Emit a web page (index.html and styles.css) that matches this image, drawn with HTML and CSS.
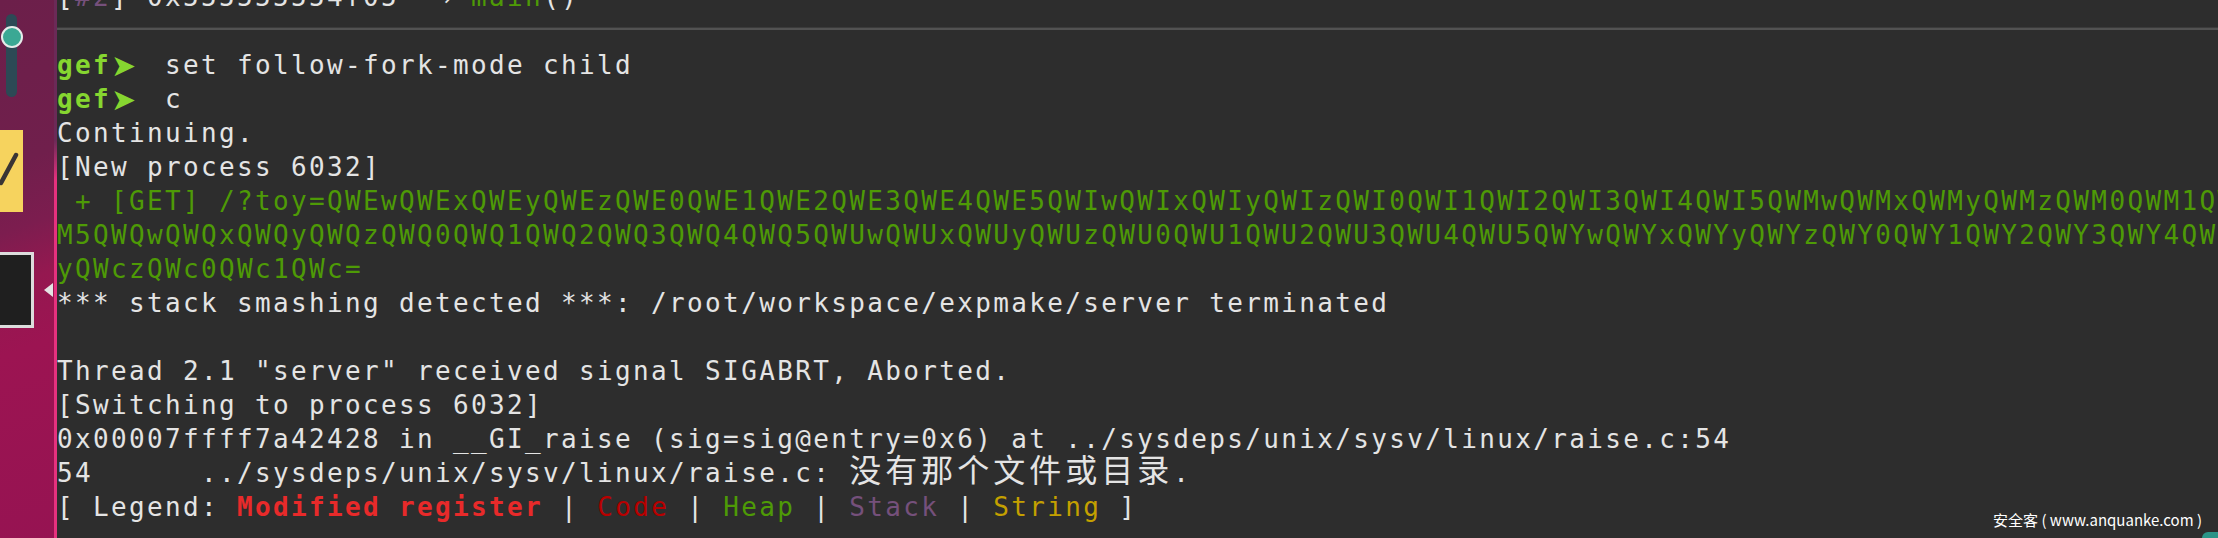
FILE: index.html
```html
<!DOCTYPE html>
<html lang="zh-CN">
<head>
<meta charset="utf-8">
<title>gef terminal</title>
<link rel="stylesheet" href="styles.css">
</head>
<body>
<div class="screen">
  <aside class="side">
    <div class="slider">
      <div class="track"></div>
      <div class="knob"></div>
    </div>
    <div class="note">
      <svg width="23" height="82" viewBox="0 0 23 82"><line x1="16" y1="25" x2="1" y2="53" stroke="#3a3534" stroke-width="4.5" stroke-linecap="round"/></svg>
    </div>
    <div class="thumb"></div>
    <div class="pointer"></div>
  </aside>
  <div class="edge"></div>
  <main class="term">
    <div class="lines">
      <div class="ln">[<span class="mag">#2</span>] 0x555555554f05  → <span class="grn">main</span>()</div>
      <div class="sep"></div>
      <div class="ln"><span class="prompt">gef<span class="arr">➤</span></span>  set follow-fork-mode child</div>
      <div class="ln"><span class="prompt">gef<span class="arr">➤</span></span>  c</div>
      <div class="ln">Continuing.</div>
      <div class="ln">[New process 6032]</div>
      <div class="ln grn"> + [GET] /?toy=QWEwQWExQWEyQWEzQWE0QWE1QWE2QWE3QWE4QWE5QWIwQWIxQWIyQWIzQWI0QWI1QWI2QWI3QWI4QWI5QWMwQWMxQWMyQWMzQWM0QWM1QWM2QWM3QWM4QW</div>
      <div class="ln grn">M5QWQwQWQxQWQyQWQzQWQ0QWQ1QWQ2QWQ3QWQ4QWQ5QWUwQWUxQWUyQWUzQWU0QWU1QWU2QWU3QWU4QWU5QWYwQWYxQWYyQWYzQWY0QWY1QWY2QWY3QWY4QWY5QWcwQWcxQWc</div>
      <div class="ln grn">yQWczQWc0QWc1QWc=</div>
      <div class="ln">*** stack smashing detected ***: /root/workspace/expmake/server terminated</div>
      <div class="ln"></div>
      <div class="ln">Thread 2.1 "server" received signal SIGABRT, Aborted.</div>
      <div class="ln">[Switching to process 6032]</div>
      <div class="ln">0x00007ffff7a42428 in __GI_raise (sig=sig@entry=0x6) at ../sysdeps/unix/sysv/linux/raise.c:54</div>
      <div class="ln">54      ../sysdeps/unix/sysv/linux/raise.c: <span class="cjk">没有那个文件或目录</span>.</div>
      <div class="ln">[ Legend: <span class="mod">Modified register</span> | <span class="code">Code</span> | <span class="grn">Heap</span> | <span class="mag">Stack</span> | <span class="yel">String</span> ]</div>
    </div>
    <div class="wm">安全客 ( www.anquanke.com )</div>
    <div class="corner"></div>
  </main>
</div>
</body>
</html>
```

FILE: styles.css
```css
* {
  box-sizing: border-box;
  margin: 0;
  padding: 0;
}

html, body {
  width: 2218px;
  height: 538px;
  overflow: hidden;
  background: #2d2d2d;
}

.screen {
  display: flex;
  width: 2218px;
  height: 538px;
}

/* left desktop strip */
.side {
  position: relative;
  flex: none;
  width: 54px;
  height: 538px;
  padding-top: 14px;
  background:
    linear-gradient(160deg, #6c1f4a 0%, #701f4c 30%, #7c1d4f 42%, #951850 52%, #9c1452 64%, #961352 100%);
}

.slider {
  position: relative;
  width: 24px;
  height: 83px;
}

.track {
  width: 11px;
  height: 83px;
  margin-left: 6px;
  border-radius: 6px;
  background: #2c4955;
}

.knob {
  position: absolute;
  top: 12px;
  left: 1px;
  width: 22px;
  height: 22px;
  border-radius: 50%;
  border: 2px solid #e6ecea;
  background: #3ba894;
}

.note {
  width: 23px;
  height: 82px;
  margin-top: 33px;
  background: #f6d35e;
}

.note svg {
  display: block;
}

.thumb {
  width: 34px;
  height: 76px;
  margin-top: 40px;
  border: 3px solid #dcdcdc;
  border-left: none;
  background: #1f1f1f;
}

.pointer {
  position: absolute;
  left: 44px;
  top: 283px;
  width: 0;
  height: 0;
  border-top: 7px solid transparent;
  border-bottom: 7px solid transparent;
  border-right: 9px solid #e4e4e4;
}

.edge {
  flex: none;
  width: 3px;
  height: 538px;
  background: linear-gradient(to bottom, #6b2a57 0, #6b2a57 140px, #e6317e 180px, #e6317e 100%);
}

/* terminal */
.term {
  position: relative;
  flex: 1;
  min-width: 0;
  height: 538px;
  overflow: hidden;
  background: #2d2d2d;
  color: #e4e4e4;
  font-family: "DejaVu Sans Mono", "Liberation Mono", monospace;
  font-size: 26px;
  letter-spacing: 2.35px;
}

.lines {
  margin-top: -20px;
}

.ln {
  height: 34px;
  line-height: 34px;
  white-space: pre;
}

.sep {
  height: 34px;
  background: linear-gradient(to bottom,
    transparent 0, transparent 13px,
    #3b3b3b 13px, #3b3b3b 14px,
    #525252 14px, #525252 16px,
    transparent 16px);
}

.prompt {
  color: #86d630;
  font-weight: bold;
}

.arr {
  display: inline-block;
  width: 18px;
  letter-spacing: 0;
  font-family: "DejaVu Sans", sans-serif;
  font-size: 30px;
  line-height: 30px;
  vertical-align: -2px;
}

.grn {
  color: #4e9a06;
}

.mag {
  color: #75507b;
}

.mod {
  color: #e82a2a;
  font-weight: bold;
}

.code {
  color: #b80000;
}

.yel {
  color: #c4a000;
}

.cjk {
  font-family: "Noto Sans CJK SC", sans-serif;
  font-size: 32px;
  letter-spacing: 4px;
  line-height: 16px;
}

.wm {
  position: absolute;
  right: 16px;
  bottom: 7px;
  font-family: "Noto Sans CJK SC", "Liberation Sans", sans-serif;
  font-size: 15px;
  letter-spacing: 0;
  line-height: 22px;
  color: #ffffff;
}

.corner {
  position: absolute;
  right: 0;
  bottom: 0;
  width: 16px;
  height: 6px;
  border-top-left-radius: 8px;
  background: #2a9487;
}
```
